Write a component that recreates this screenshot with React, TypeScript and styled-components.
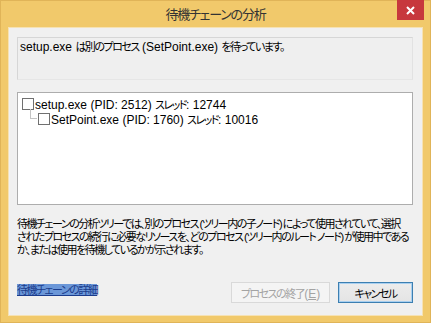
import React from 'react';
import styled, { createGlobalStyle } from 'styled-components';

const GlobalStyle = createGlobalStyle`
  html, body {
    margin: 0;
    padding: 0;
    width: 431px;
    height: 323px;
    overflow: hidden;
    background: #f1c96b;
  }
  * {
    box-sizing: border-box;
  }
`;

const FONT = `"Liberation Sans", "Noto Sans CJK JP", sans-serif`;

type Row = { name: string; pid: number; threads: number; depth: number };

const rows: Row[] = [
  { name: 'setup.exe', pid: 2512, threads: 12744, depth: 0 },
  { name: 'SetPoint.exe', pid: 1760, threads: 10016, depth: 1 },
];

// line breaks as the dialog wraps them
const descriptionLines = [
  '待機チェーンの分析ツリーでは、別のプロセス (ツリー内の子ノード) によって使用されていて、選択',
  'されたプロセスの続行に必要なリソースを、どのプロセス (ツリー内のルート ノード) が使用中である',
  'か、または使用を待機しているかが示されます。',
];

function App() {
  return (
    <>
      <GlobalStyle />
      <DialogFrame>
        <TitleBar>
          <Title>待機チェーンの分析</Title>
          <CloseButton aria-label="閉じる">
            <svg width="9" height="9" viewBox="0 0 9 9">
              <path d="M1 1 L8 8 M8 1 L1 8" stroke="#fff" strokeWidth="2" />
            </svg>
          </CloseButton>
        </TitleBar>

        <ClientArea>
          <StatusBox>
            setup.exe <Jp>は別のプロセス</Jp> (SetPoint.exe) <Jp>を待っています。</Jp>
          </StatusBox>

          <TreeBox>
            {rows.map((row) => (
              <TreeRow key={row.pid} depth={row.depth}>
                {row.depth > 0 && <Connector />}
                <CheckBox />
                <span>
                  {row.name} (PID: {row.pid}) <Jp>スレッド</Jp>: {row.threads}
                </span>
              </TreeRow>
            ))}
          </TreeBox>

          <Description>
            {descriptionLines.map((line) => (
              <DescLine key={line}>{line}</DescLine>
            ))}
          </Description>

          <Footer>
            <DetailLink href="#">待機チェーンの詳細</DetailLink>
            <ButtonGroup>
              <DialogButton disabled width={99}>
                <Jp>プロセスの終了</Jp>(<u>E</u>)
              </DialogButton>
              <DialogButton primary width={75}>
                <Jp>キャンセル</Jp>
              </DialogButton>
            </ButtonGroup>
          </Footer>
        </ClientArea>
      </DialogFrame>
    </>
  );
}

const DialogFrame = styled.div`
  display: flex;
  flex-direction: column;
  width: 431px;
  height: 323px;
  background: #f1c96b;
  border: 1px solid #e0b458;
  font-family: ${FONT};
  font-feature-settings: 'palt' 1;
`;

const Jp = styled.span`
  font-size: 11px;
  letter-spacing: -1.5px;
`;

const TitleBar = styled.div`
  position: relative;
  height: 26px;
  display: flex;
  justify-content: center;
  align-items: center;
  flex-shrink: 0;
`;

const Title = styled.div`
  font-size: 13px;
  color: #333;
  margin-top: -2px;
  letter-spacing: -1.2px;
  font-family: "Noto Sans CJK JP", sans-serif;
`;

const CloseButton = styled.div`
  position: absolute;
  top: -1px;
  right: 6px;
  width: 27px;
  height: 20px;
  background: #c7383d;
  display: flex;
  align-items: center;
  justify-content: center;
`;

const ClientArea = styled.div`
  flex: 1;
  margin: 0 7px 6px 7px;
  background: #f0f0f0;
  border: 1px solid #f6e2b4;
  padding: 9px 9px 0 8px;
  display: flex;
  flex-direction: column;
`;

const StatusBox = styled.div`
  height: 43px;
  border: 1px solid #d6d6d6;
  border-bottom-color: #e6e6e6;
  border-right-color: #e2e2e2;
  background: #efefef;
  padding: 2px 2px;
  font-size: 12px;
  color: #000;
  line-height: 15px;
  white-space: nowrap;
`;

const TreeBox = styled.div`
  margin-top: 12px;
  height: 113px;
  background: #fff;
  border: 1px solid #adadad;
  padding: 3px 4px;
`;

const TreeRow = styled.div<{ depth: number }>`
  position: relative;
  display: flex;
  align-items: center;
  height: 15px;
  padding-left: ${(p) => p.depth * 16}px;
  font-size: 12px;
  color: #000;
  white-space: nowrap;
`;

const Connector = styled.div`
  position: absolute;
  left: 8px;
  top: -2px;
  width: 7px;
  height: 10px;
  border-left: 1px solid #c4c4c4;
  border-bottom: 1px solid #c4c4c4;
`;

const CheckBox = styled.div`
  width: 12px;
  height: 12px;
  border: 1px solid #707070;
  background: #fff;
  margin-right: 1px;
  flex-shrink: 0;
`;

const Description = styled.div`
  margin-top: 13px;
  font-size: 11px;
  line-height: 13px;
  color: #000;
  letter-spacing: -1.5px;
`;

const DescLine = styled.div`
  white-space: nowrap;
`;

const Footer = styled.div`
  margin-top: auto;
  margin-bottom: 12px;
  display: flex;
  justify-content: space-between;
  align-items: center;
`;

const DetailLink = styled.a`
  font-size: 11px;
  color: #1b3c8c;
  background: #6b97d8;
  text-decoration: underline;
  line-height: 12px;
  margin-top: -6px;
  letter-spacing: -1.5px;
`;

const ButtonGroup = styled.div`
  display: flex;
  gap: 8px;
`;

const DialogButton = styled.button<{ primary?: boolean; width: number }>`
  width: ${(p) => p.width}px;
  height: 21px;
  font-family: ${FONT};
  font-feature-settings: 'palt' 1;
  font-size: 12px;
  white-space: nowrap;
  padding: 0;
  border: 1px solid ${(p) => (p.primary ? '#3c7fb1' : '#d9d9d9')};
  background: ${(p) => (p.primary ? 'linear-gradient(#ececec, #e4e4e4)' : '#f4f4f4')};
  color: ${(p) => (p.disabled ? '#a3a3a3' : '#000')};
  box-shadow: ${(p) => (p.primary ? 'inset 0 0 0 1px #a9d0f0' : 'none')};
`;

export default App;
